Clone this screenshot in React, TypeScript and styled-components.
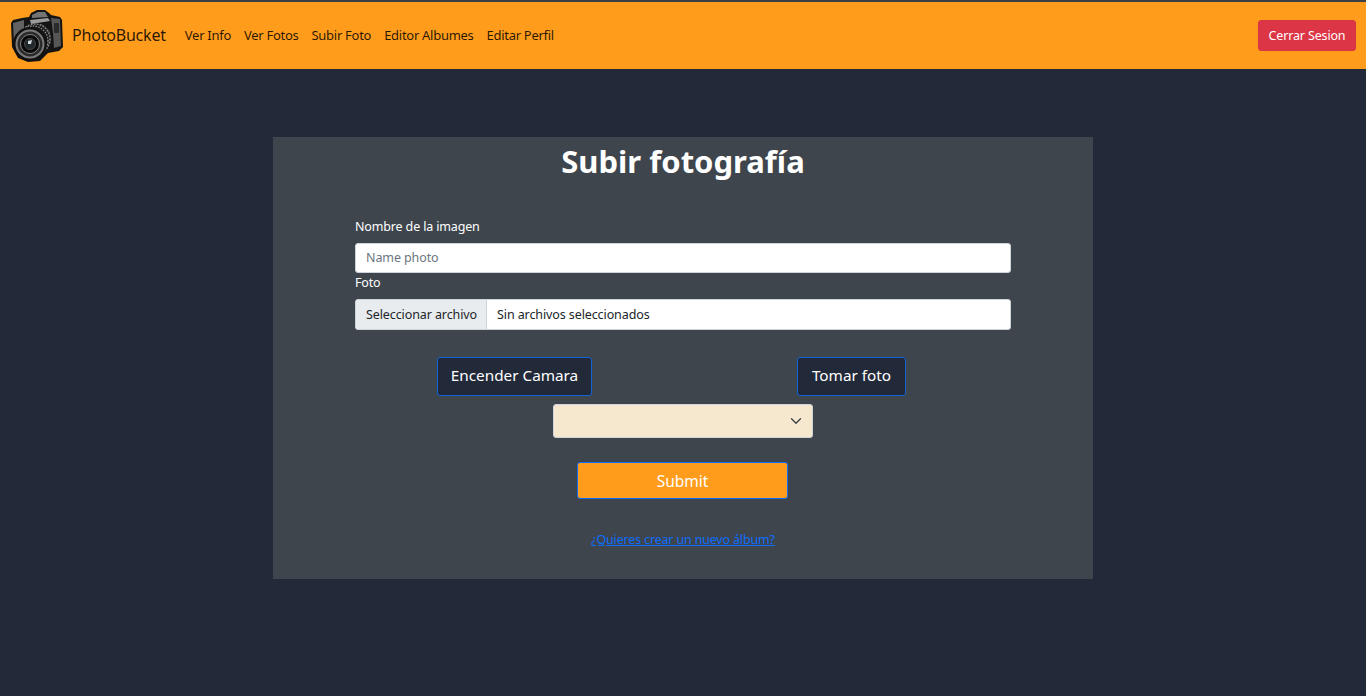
import React from 'react'
import styled, { createGlobalStyle } from 'styled-components'

const GlobalStyle = createGlobalStyle`
    html, body {
        margin: 0;
        padding: 0;
        height: 100%;
        background: #222a3a;
        font-family: 'Noto Sans', 'Open Sans', sans-serif;
    }
`

const CameraLogo = () => (
    <svg width="54" height="54" viewBox="0 0 54 54">
        <path d="M1 14 L3 11 L12 9 L19 8 L21 4 L27 1 L35 1 L39 4 L41 6 L50 8 L52 11 L53 38 L49 42 L38 44 L30 52 L18 53 L8 49 L2 38 Z" fill="#141414" />
        <path d="M3 14 L14 11 L14 20 L4 34 Z" fill="#626262" />
        <path d="M22 6 L28 3 L35 3 L38 8 L22 9 Z" fill="#747474" />
        <path d="M20 11 L38 9 L40 12 L21 15 Z" fill="#9a9a9a" />
        <path d="M41 9 L50 10 L51 37 L44 39 L43 24 Z" fill="#565656" />
        <rect x="44" y="14" width="5" height="10" rx="1" fill="#2a2a2a" />
        <path d="M16 17 L32 15 L40 22 L41 34 L34 40 Z" fill="#3a3a3a" />
        <circle cx="25" cy="30" r="15" fill="#1d1d1d" stroke="#8a8a8a" strokeWidth="1.4" strokeDasharray="1.6 1.4" />
        <circle cx="23" cy="32" r="15" fill="#181818" stroke="#9a9a9a" strokeWidth="1.2" strokeDasharray="1.4 1.4" />
        <circle cx="20" cy="35" r="17" fill="#111111" />
        <circle cx="20" cy="35" r="14.5" fill="#7a7a7a" />
        <circle cx="20" cy="35" r="12.5" fill="#2a2a2a" />
        <circle cx="20" cy="35" r="9.5" fill="#090909" stroke="#808080" strokeWidth="1" />
        <circle cx="20" cy="35" r="5.5" fill="#20282c" stroke="#454545" strokeWidth="1" />
        <path d="M18 32 L22 31 L21 35 L18 35 Z" fill="#cfd8da" />
    </svg>
)

const Chevron = () => (
    <svg width="12" height="12" viewBox="0 0 16 16">
        <path d="M2 5l6 6 6-6" fill="none" stroke="#343a40" strokeWidth="1.6" strokeLinecap="round" strokeLinejoin="round" />
    </svg>
)

const App = () => (
    <>
        <GlobalStyle />
        <Navbar>
            <Brand>
                <CameraLogo />
                <BrandName>PhotoBucket</BrandName>
            </Brand>
            <NavLinks>
                <NavLink>Ver Info</NavLink>
                <NavLink>Ver Fotos</NavLink>
                <NavLink>Subir Foto</NavLink>
                <NavLink>Editor Albumes</NavLink>
                <NavLink>Editar Perfil</NavLink>
            </NavLinks>
            <LogoutButton>Cerrar Sesion</LogoutButton>
        </Navbar>
        <Main>
            <Card>
                <Title>Subir fotografía</Title>
                <Form>
                    <Label>Nombre de la imagen</Label>
                    <TextInput placeholder="Name photo" />
                    <FileLabel>Foto</FileLabel>
                    <FileField>
                        <FileButton>Seleccionar archivo</FileButton>
                        <FileStatus>Sin archivos seleccionados</FileStatus>
                    </FileField>
                </Form>
                <CameraRow>
                    <DarkButton $width={155}>Encender Camara</DarkButton>
                    <DarkButton $width={109}>Tomar foto</DarkButton>
                </CameraRow>
                <AlbumSelect>
                    <Chevron />
                </AlbumSelect>
                <SubmitButton>Submit</SubmitButton>
                <AlbumLink href="#">¿Quieres crear un nuevo álbum?</AlbumLink>
            </Card>
        </Main>
    </>
)

export default App

const Navbar = styled.nav`
    box-sizing: border-box;
    height: 69px;
    display: flex;
    align-items: center;
    padding: 0 10px;
    background: #ff9c1c;
    border-top: 2px solid #3c3f43;
`

const Brand = styled.div`
    display: flex;
    align-items: center;
    gap: 8px;
`

const BrandName = styled.span`
    font-size: 16px;
    line-height: 24px;
    letter-spacing: -0.2px;
    color: rgba(0, 0, 0, 0.85);
    position: relative;
    top: -1px;
`

const NavLinks = styled.div`
    display: flex;
    gap: 13px;
    margin-left: 19px;
    padding-bottom: 2px;
    flex: 1;
`

const NavLink = styled.a`
    font-size: 13px;
    line-height: 20px;
    letter-spacing: -0.28px;
    color: rgba(0, 0, 0, 0.85);
`

const LogoutButton = styled.button`
    width: 98px;
    height: 31px;
    padding: 0;
    font: inherit;
    font-size: 12.5px;
    letter-spacing: -0.15px;
    color: #fff;
    background: #dc3545;
    border: 1px solid #dc3545;
    border-radius: 3px;
`

const Main = styled.main`
    display: flex;
    justify-content: center;
    padding-top: 68px;
`

const Card = styled.section`
    box-sizing: border-box;
    width: 820px;
    height: 442px;
    display: flex;
    flex-direction: column;
    align-items: center;
    background: #3e454d;
`

const Title = styled.h1`
    margin: 4px 0 0;
    font-size: 31px;
    line-height: 40px;
    font-weight: 700;
    color: #fff;
`

const Form = styled.div`
    width: 656px;
    margin-top: 36px;
    display: flex;
    flex-direction: column;
    letter-spacing: -0.1px;
`

const Label = styled.label`
    font-size: 12.5px;
    line-height: 20px;
    letter-spacing: -0.15px;
    color: #fff;
    margin-bottom: 6px;
`

const FileLabel = styled(Label)`
    margin-bottom: 6px;
`

const TextInput = styled.input`
    box-sizing: border-box;
    width: 100%;
    height: 30px;
    padding: 0 10px 2px;
    font: inherit;
    font-size: 12.5px;
    letter-spacing: -0.1px;
    color: #212529;
    background: #fff;
    border: 1px solid #ced4da;
    border-radius: 3px;
    outline: none;

    &::placeholder {
        color: #6c757d;
    }
`

const FileField = styled.div`
    box-sizing: border-box;
    height: 31px;
    display: flex;
    align-items: stretch;
    font-size: 12.5px;
    color: #212529;
    background: #fff;
    border: 1px solid #ced4da;
    border-radius: 3px;
    overflow: hidden;
`

const FileButton = styled.div`
    display: flex;
    align-items: center;
    width: 131px;
    padding-left: 10px;
    box-sizing: border-box;
    background: #e9ecef;
    border-right: 1px solid #ced4da;
`

const FileStatus = styled.div`
    display: flex;
    align-items: center;
    padding-left: 10px;
`

const CameraRow = styled.div`
    align-self: flex-start;
    width: 469px;
    margin: 27px 0 0 164px;
    display: flex;
    justify-content: space-between;
`

const DarkButton = styled.button<{ $width: number }>`
    box-sizing: border-box;
    width: ${(props) => props.$width}px;
    height: 39px;
    padding: 0 0 3px;
    font: inherit;
    font-size: 15.3px;
    color: #fff;
    background: #222a3a;
    border: 1px solid #1463d6;
    border-radius: 3px;
`

const AlbumSelect = styled.div`
    box-sizing: border-box;
    width: 260px;
    height: 34px;
    margin-top: 8px;
    display: flex;
    align-items: center;
    justify-content: flex-end;
    padding-right: 10px;
    background: #f5e8ce;
    border: 1px solid #ced4da;
    border-radius: 3px;
`

const SubmitButton = styled.button`
    box-sizing: border-box;
    width: 211px;
    height: 37px;
    margin: 24px 1px 0 0;
    padding: 0;
    font: inherit;
    font-size: 15.5px;
    color: #fff;
    background: #ff9c1c;
    border: 1px solid #0d6efd;
    border-radius: 3px;
`

const AlbumLink = styled.a`
    margin-top: 32px;
    font-size: 12.5px;
    line-height: 18px;
    letter-spacing: -0.17px;
    color: #0d6efd;
    text-decoration: underline;
`
